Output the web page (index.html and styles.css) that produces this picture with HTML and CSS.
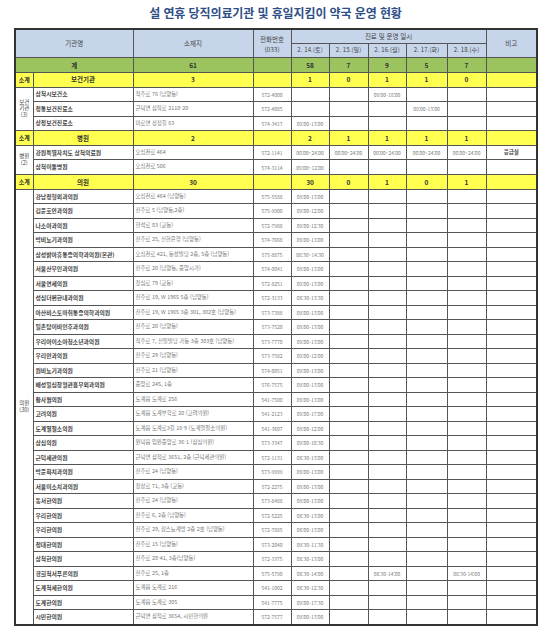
FILE: index.html
```html
<!DOCTYPE html>
<html lang="ko">
<head>
<meta charset="utf-8">
<link rel="stylesheet" href="styles.css">
</head>
<body>
<div class="page">
<h1 class="title">설 연휴 당직의료기관 및 휴일지킴이 약국 운영 현황</h1>
<table class="tbl">
<colgroup>
<col class="c-a"><col class="c-b"><col class="c-ad"><col class="c-ph"><col class="c-d1"><col class="c-d2"><col class="c-d3"><col class="c-d4"><col class="c-d5"><col class="c-bg">
</colgroup>
<thead>
<tr class="hd hd1">
<th colspan="2" rowspan="2">기관명</th>
<th rowspan="2">소재지</th>
<th rowspan="2" class="phh"><span class="phl">전화번호</span><span class="phl">(033)</span></th>
<th colspan="5">진료 및 운영 일시</th>
<th rowspan="2">비고</th>
</tr>
<tr class="hd hd2">
<th>2. 14.(토)</th><th>2. 15.(일)</th><th>2. 16.(월)</th><th>2. 17.(화)</th><th>2. 18.(수)</th>
</tr>
</thead>
<tbody>
<tr class="tot"><td colspan="2">계</td><td>61</td><td></td><td>58</td><td>7</td><td>9</td><td>5</td><td>7</td><td></td></tr>

<tr class="sub"><td class="lbl">소계</td><td>보건기관</td><td>3</td><td></td><td>1</td><td>0</td><td>1</td><td>1</td><td>0</td><td></td></tr>
<tr class="row"><td class="grp" rowspan="3">보건<br>기관<br>(3)</td><td class="nm">삼척시보건소</td><td class="ad">척주로 76 (남양동)</td><td class="ph">572-4000</td><td></td><td></td><td class="tm">09:00-18:00</td><td></td><td></td><td></td></tr>
<tr class="row"><td class="nm">정통보건진료소</td><td class="ad">근덕면 삼척로 2110-20</td><td class="ph">572-4085</td><td></td><td></td><td></td><td class="tm">09:00-13:00</td><td></td><td></td></tr>
<tr class="row"><td class="nm">상정보건진료소</td><td class="ad">미로면 상정길 63</td><td class="ph">574-3417</td><td class="tm">09:00-13:00</td><td></td><td></td><td></td><td></td><td></td></tr>

<tr class="sub"><td class="lbl">소계</td><td>병원</td><td>2</td><td></td><td>2</td><td>1</td><td>1</td><td>1</td><td>1</td><td></td></tr>
<tr class="row"><td class="grp" rowspan="2">병원<br>(2)</td><td class="nm">강원특별자치도 삼척의료원</td><td class="ad">오십천로 464</td><td class="ph">572-1141</td><td class="tm">00:00~24:00</td><td class="tm">00:00~24:00</td><td class="tm">00:00~24:00</td><td class="tm">00:00~24:00</td><td class="tm">00:00~24:00</td><td class="nt">응급실</td></tr>
<tr class="row"><td class="nm">삼척이돌병원</td><td class="ad">오십천로 506</td><td class="ph">574-3114</td><td class="tm">09:00~12:00</td><td></td><td></td><td></td><td></td><td></td></tr>

<tr class="sub"><td class="lbl">소계</td><td>의원</td><td>30</td><td></td><td>30</td><td>0</td><td>1</td><td>0</td><td>1</td><td></td></tr>
<tr class="row"><td class="grp" rowspan="30">의원<br>(30)</td><td class="nm">강남정형외과의원</td><td class="ad">오십천로 464 (남양동)</td><td class="ph">575-5588</td><td class="tm">09:00-13:00</td><td></td><td></td><td></td><td></td><td></td></tr>
<tr class="row"><td class="nm">김윤호안과의원</td><td class="ad">진주로 5 (남양동,2층)</td><td class="ph">575-9900</td><td class="tm">09:00-12:00</td><td></td><td></td><td></td><td></td><td></td></tr>
<tr class="row"><td class="nm">나소아과의원</td><td class="ad">현석로 83 (교동)</td><td class="ph">572-7988</td><td class="tm">09:00-12:30</td><td></td><td></td><td></td><td></td><td></td></tr>
<tr class="row"><td class="nm">박비뇨기과의원</td><td class="ad">진주로 25, 신한은행 (남양동)</td><td class="ph">574-7668</td><td class="tm">09:00-13:00</td><td></td><td></td><td></td><td></td><td></td></tr>
<tr class="row"><td class="nm">삼성밝아휴통증의학과의원(본관)</td><td class="ad">오십천로 421, 동성빌딩 2층, 5층 (남양동)</td><td class="ph">575-8875</td><td class="tm">08:30~14:30</td><td></td><td></td><td></td><td></td><td></td></tr>
<tr class="row"><td class="nm">서울산부인과의원</td><td class="ad">진주로 20 (남양동, 중앙시가)</td><td class="ph">574-0041</td><td class="tm">09:00-13:00</td><td></td><td></td><td></td><td></td><td></td></tr>
<tr class="row"><td class="nm">서울연세의원</td><td class="ad">청심로 79 (교동)</td><td class="ph">572-8251</td><td class="tm">09:00-13:00</td><td></td><td></td><td></td><td></td><td></td></tr>
<tr class="row"><td class="nm">성심더편한내과의원</td><td class="ad">진주로 19, W 1965 5층 (남양동)</td><td class="ph">572-3133</td><td class="tm">08:30-13:30</td><td></td><td></td><td></td><td></td><td></td></tr>
<tr class="row"><td class="nm">아산비스토마취통증의학과의원</td><td class="ad">진주로 19, W 1965 3층 301, 302호 (남양동)</td><td class="ph">573-7388</td><td class="tm">09:00-13:00</td><td></td><td></td><td></td><td></td><td></td></tr>
<tr class="row"><td class="nm">일촌탐이비인후과의원</td><td class="ad">진주로 20 (남양동)</td><td class="ph">573-7520</td><td class="tm">09:00-13:00</td><td></td><td></td><td></td><td></td><td></td></tr>
<tr class="row"><td class="nm">우리아이소아청소년과의원</td><td class="ad">척주로 7, 신일빌딩 가동 3층 303호 (남양동)</td><td class="ph">573-7770</td><td class="tm">09:00-13:00</td><td></td><td></td><td></td><td></td><td></td></tr>
<tr class="row"><td class="nm">우리안과의원</td><td class="ad">진주로 29 (남양동)</td><td class="ph">573-7582</td><td class="tm">09:00-12:00</td><td></td><td></td><td></td><td></td><td></td></tr>
<tr class="row"><td class="nm">원비뇨기과의원</td><td class="ad">진주로 21 (남양동)</td><td class="ph">574-0051</td><td class="tm">09:00-13:00</td><td></td><td></td><td></td><td></td><td></td></tr>
<tr class="row"><td class="nm">배성일심장혈관흉부외과의원</td><td class="ad">중앙로 245, 1층</td><td class="ph">576-7575</td><td class="tm">09:00-13:00</td><td></td><td></td><td></td><td></td><td></td></tr>
<tr class="row"><td class="nm">황사월의원</td><td class="ad">도계읍 도계로 256</td><td class="ph">541-7580</td><td class="tm">09:00-13:00</td><td></td><td></td><td></td><td></td><td></td></tr>
<tr class="row"><td class="nm">고려의원</td><td class="ad">도계읍 도계부학로 20 (고려의원)</td><td class="ph">541-2123</td><td class="tm">09:00-17:00</td><td></td><td></td><td></td><td></td><td></td></tr>
<tr class="row"><td class="nm">도계열절소의원</td><td class="ad">도계읍 도계로3길 16-9 (도계열절소의원)</td><td class="ph">541-3607</td><td class="tm">09:00-12:00</td><td></td><td></td><td></td><td></td><td></td></tr>
<tr class="row"><td class="nm">삼심의원</td><td class="ad">원덕읍 임원중앙로 36-1 (삼심의원)</td><td class="ph">573-3347</td><td class="tm">09:00-10:30</td><td></td><td></td><td></td><td></td><td></td></tr>
<tr class="row"><td class="nm">근덕세관의원</td><td class="ad">근덕면 삼척로 3651, 2층 (근덕세관의원)</td><td class="ph">572-1131</td><td class="tm">08:30-13:00</td><td></td><td></td><td></td><td></td><td></td></tr>
<tr class="row"><td class="nm">박윤화치과의원</td><td class="ad">진주로 24 (남양동)</td><td class="ph">573-9999</td><td class="tm">09:00-13:00</td><td></td><td></td><td></td><td></td><td></td></tr>
<tr class="row"><td class="nm">서울미소치과의원</td><td class="ad">청상로 71, 3층 (교동)</td><td class="ph">572-2275</td><td class="tm">09:00-13:00</td><td></td><td></td><td></td><td></td><td></td></tr>
<tr class="row"><td class="nm">동서한의원</td><td class="ad">진주로 24 (남양동)</td><td class="ph">573-8488</td><td class="tm">09:00-13:00</td><td></td><td></td><td></td><td></td><td></td></tr>
<tr class="row"><td class="nm">우리한의원</td><td class="ad">진주로 6, 2층 (남양동)</td><td class="ph">572-5225</td><td class="tm">08:30-13:00</td><td></td><td></td><td></td><td></td><td></td></tr>
<tr class="row"><td class="nm">우리한의원</td><td class="ad">진주로 29, 잠스뇨계방 2층 2호 (남양동)</td><td class="ph">572-7885</td><td class="tm">08:00-13:00</td><td></td><td></td><td></td><td></td><td></td></tr>
<tr class="row"><td class="nm">정대한의원</td><td class="ad">진주로 15 (남양동)</td><td class="ph">573-2040</td><td class="tm">09:30-11:30</td><td></td><td></td><td></td><td></td><td></td></tr>
<tr class="row"><td class="nm">삼척한의원</td><td class="ad">진주로 28-41, 3층(남양동)</td><td class="ph">572-3375</td><td class="tm">08:30-13:00</td><td></td><td></td><td></td><td></td><td></td></tr>
<tr class="row"><td class="nm">경희척서푸른의원</td><td class="ad">진주로 25, 1층</td><td class="ph">575-5790</td><td class="tm">08:30-14:00</td><td></td><td class="tm">08:30-14:00</td><td></td><td class="tm">08:30-14:00</td><td></td></tr>
<tr class="row"><td class="nm">도계척세한의원</td><td class="ad">도계읍 도계로 216</td><td class="ph">541-1002</td><td class="tm">08:30-12:30</td><td></td><td></td><td></td><td></td><td></td></tr>
<tr class="row"><td class="nm">도계한의원</td><td class="ad">도계읍 도계로 305</td><td class="ph">541-7775</td><td class="tm">09:00-17:30</td><td></td><td></td><td></td><td></td><td></td></tr>
<tr class="row"><td class="nm">시민한의원</td><td class="ad">근덕면 삼척로 3654, 시민한의원</td><td class="ph">572-7577</td><td class="tm">09:00-13:00</td><td></td><td></td><td></td><td></td><td></td></tr>
</tbody>
</table>
</div>
</body>
</html>
```

FILE: styles.css
```css
html, body {
  margin: 0;
  padding: 0;
  background: #ffffff;
}
body {
  font-family: "Noto Sans CJK KR", "Noto Sans", sans-serif;
  color: #333;
}
.page {
  padding: 0 14px 0 14px;
}
.title {
  margin: 0;
  height: 28px;
  line-height: 26px;
  font-size: 12px;
  font-weight: 700;
  color: #2f4f86;
  text-align: center;
  letter-spacing: -0.1px;
}
.tbl {
  width: 522px;
  table-layout: fixed;
  border-collapse: collapse;
  border: 2px solid #333;
  font-size: 6px;
}
.c-a { width: 18px; }
.c-b { width: 100px; }
.c-ad { width: 120px; }
.c-ph { width: 38px; }
.c-d1 { width: 38px; }
.c-d2 { width: 39px; }
.c-d3 { width: 38px; }
.c-d4 { width: 41px; }
.c-d5 { width: 39px; }
.c-bg { width: 51px; }
.tbl td, .tbl th {
  border: 1px solid #555;
  padding: 0;
  overflow: hidden;
  white-space: nowrap;
  line-height: 1;
}
.hd th {
  background: #c7d5ea;
  font-weight: 400;
  font-size: 6.5px;
  color: #444;
  text-align: center;
}
.hd1 { height: 14px; }
.hd2 { height: 14.5px; }
.hd2 th {
  font-size: 6px;
  letter-spacing: 0.1px;
}
.phl {
  display: block;
  line-height: 10px;
  height: 10px;
}
.tot td {
  background: #9cc45e;
  text-align: center;
  font-weight: 700;
  font-size: 6.5px;
  color: #333;
  height: 13.8px;
}
.sub td {
  background: #ffff4f;
  text-align: center;
  font-weight: 700;
  font-size: 6.5px;
  color: #333;
  height: 13.8px;
}
.sub .lbl {
  font-size: 6px;
}
.row td {
  height: 13.5px;
  text-align: center;
}
.tbl .grp {
  font-size: 5.5px;
  line-height: 1.25;
  color: #444;
  white-space: normal;
}
.tbl .nm {
  text-align: left;
  padding-left: 2px;
  font-weight: 700;
  font-size: 5.8px;
  color: #444;
}
.tbl .ad {
  text-align: left;
  padding-left: 2px;
  font-size: 5.4px;
  color: #777;
}
.ph {
  font-size: 5px;
  color: #777;
}
.tm {
  font-size: 5px;
  color: #777;
}
.nt {
  font-size: 5.5px;
  font-weight: 700;
  color: #444;
}
```
